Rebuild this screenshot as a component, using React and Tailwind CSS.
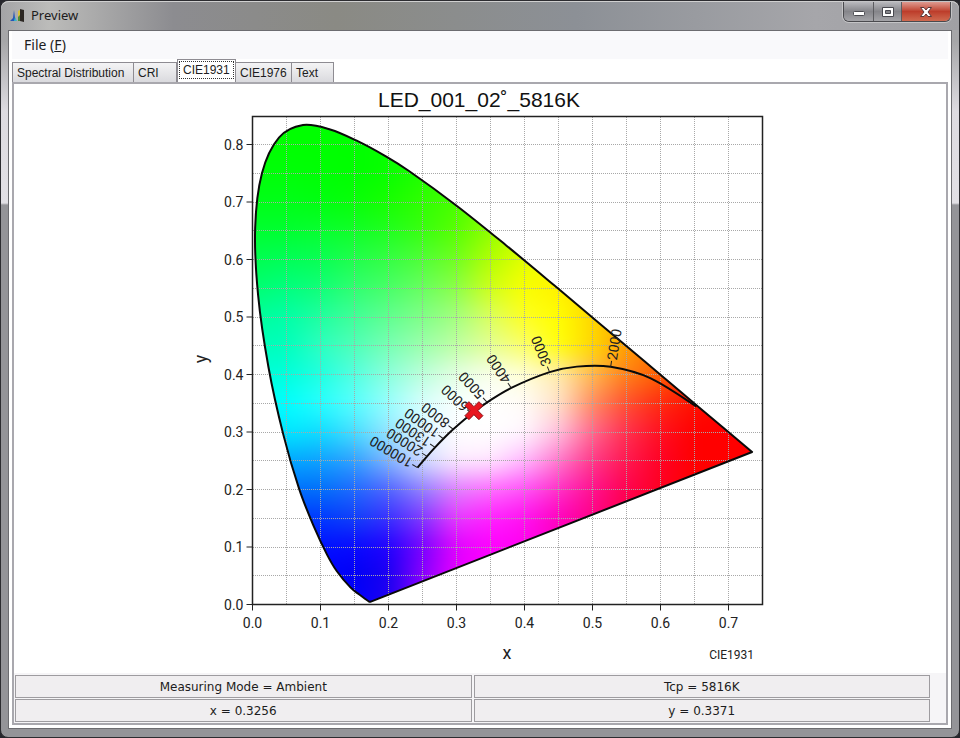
import React from 'react';

const TABS = [
  { label: 'Spectral Distribution', width: 'w-[122px]' },
  { label: 'CRI', width: 'w-[43px]' },
  { label: 'CIE1931', width: 'w-[59px]' },
  { label: 'CIE1976', width: 'w-[56px]' },
  { label: 'Text', width: 'w-[42px]' },
];

// Plot geometry, in svg units
const LEFT = 62.5;
const RIGHT = 572.5;
const TOP = 32.5;
const BOTTOM = 520.5;
const px = (x) => LEFT + x * 680;
const py = (y) => BOTTOM - y * 575;

// Spectral locus, 380nm to 700nm
const LOCUS = [
  [0.1741, 0.005], [0.1714, 0.0051], [0.1644, 0.0109], [0.1566, 0.0177],
  [0.144, 0.0297], [0.1241, 0.0578], [0.1096, 0.0868], [0.0913, 0.1327],
  [0.0687, 0.2007], [0.0454, 0.295], [0.0235, 0.4127], [0.0082, 0.5384],
  [0.0039, 0.6548], [0.0139, 0.7502], [0.0389, 0.812], [0.0743, 0.8338],
  [0.1142, 0.8262], [0.1547, 0.8059], [0.1929, 0.7816], [0.2296, 0.7543],
  [0.3016, 0.6923], [0.3731, 0.6245], [0.4441, 0.5547], [0.5125, 0.4866],
  [0.5752, 0.4242], [0.627, 0.3725], [0.6915, 0.3083], [0.7347, 0.2653],
];

const PLANCKIAN = [
  [0.2426, 0.2381], [0.2567, 0.2576], [0.2685, 0.2733], [0.2807, 0.2883],
  [0.2952, 0.3048], [0.3221, 0.3318], [0.3451, 0.3516], [0.3805, 0.3767],
  [0.4369, 0.4041], [0.477, 0.4137], [0.5267, 0.4133], [0.5857, 0.3932],
  [0.6528, 0.3445],
];

const TEMPERATURES = [
  { label: '2000', x: 0.5267, y: 0.4133, angle: -81 },
  { label: '3000', x: 0.4369, y: 0.4041, angle: -112 },
  { label: '4000', x: 0.3805, y: 0.3767, angle: -124 },
  { label: '5000', x: 0.3451, y: 0.3516, angle: -133 },
  { label: '6000', x: 0.3221, y: 0.3318, angle: -137 },
  { label: '8000', x: 0.2952, y: 0.3048, angle: -142 },
  { label: '10000', x: 0.2807, y: 0.2883, angle: -144 },
  { label: '13000', x: 0.2685, y: 0.2733, angle: -146 },
  { label: '20000', x: 0.2567, y: 0.2576, angle: -148 },
  { label: '100000', x: 0.2426, y: 0.2381, angle: -149 },
];

// Colours on a 0.05 grid: one row per y (0.85 down to 0), one entry per x from 0
const COLORS = [
  '00ff00 00ff00 00ff00 00ff00 08ff00 18ff00 30ff00 60ff00',
  '00ff00 00ff00 00ff00 00ff00 08ff00 18ff00 30ff00 60ff00',
  '00ff08 00ff08 00ff04 00ff00 08ff00 20ff00 38ff00 68ff00',
  '00ff18 00ff18 00ff10 08ff08 18ff00 30ff00 48ff00 78ff00 b0ff00',
  '00ff30 00ff30 08ff30 10ff28 20ff20 38ff10 58ff00 90ff00 c8ff00',
  '00ff50 00ff58 08ff54 20ff4c 34ff44 50ff38 70ff20 b4ff00 e4ff00 ffff00',
  '00ff70 00ff80 10ff78 30ff70 48ff68 68ff60 8cff48 d0ff18 faff00 fff000 ffd800',
  '00ff9c 00ffa8 20ffa0 40ff98 60ff90 80ff88 a4ff80 dcff60 ffff20 ffff00 ffd800 ffa000',
  '00ffb8 00ffbc 2dffc0 50ffb8 78ffb4 9cffac c0ffa4 e4ff94 fcff68 ffff08 ffd800 ffa000 ff7000',
  '00ffd8 00ffdc 20ffe0 54ffe0 8cffdc bcffdc e4ffe4 faffec ffffd8 ffecb0 ffb850 ff8018 ff6000 ff3000',
  '00ffff 00ffff 28ffff 58ffff 98ffff d8ffff faffff ffffff fffcf8 ffe2c8 ff8c60 ff5030 ff2a10 ff1000 ff0000',
  '00e0ff 00e8ff 10dcff 48deff 94e4ff dcf4ff ffffff ffffff fff8ff ffc0e0 ff6890 ff3050 ff1020 ff0000 ff0000',
  '00a0ff 00a8ff 10a0ff 30a0ff 80b4ff d0dcff fdecff ffe8ff ffb8ff ff78cc ff3888 ff1850 ff0025 ff0000 ff0000 ff0000',
  '0070ff 0070ff 0070f8 2068ff 5064ff 9080ff e080ff ff6cff ff50f8 ff30c8 ff1090 ff0050 ff0020 ff0000 ff0000 ff0000',
  '0030ff 0038ff 0038ff 1040f8 3830ff 8038ff e838ff ff20ff ff10f0 ff00c0 ff0088 ff0048 ff0020',
  '0010ff 0010ff 0010ff 0808ff 2000ff 7800ff e000ff ff00ff ff00f0 ff00c0 ff0088',
  '0000ff 0000ff 0000ff 0000f4 1800f0 8800ff e800ff ff00ff ff00f0',
  '0000ff 0000ff 0000ff 0000ff 2000f0 8800ff f000ff ff00ff',
].map((row) => {
  const cells = row.split(' ').map((hex) => [0, 2, 4].map((i) => parseInt(hex.slice(i, i + 2), 16)));
  while (cells.length < 16) cells.push(cells[cells.length - 1]);
  return cells;
});

const STRIP = 4;
const BLEED = 32;

// Cut the gamut into thin horizontal strips, each with its own gradient.
// They run past the plot so that the blur has colour to pick up at the edges.
const strips = [];
for (let top = TOP - BLEED; top < BOTTOM + BLEED; top += STRIP) {
  const value = (BOTTOM - top - STRIP / 2) / 575;
  const pos = Math.min(Math.max((0.85 - value) / 0.05, 0), COLORS.length - 1);
  const row = Math.min(Math.floor(pos), COLORS.length - 2);
  const t = pos - row;
  strips.push({
    top,
    stops: COLORS[row].map((c, i) =>
      `rgb(${c.map((v, k) => Math.round(v + (COLORS[row + 1][i][k] - v) * t)).join(',')})`
    ),
  });
}

// Catmull-Rom spline through the points
const smooth = (points) => {
  const p = points.map(([x, y]) => [px(x), py(y)]);
  let d = `M${p[0][0]} ${p[0][1]}`;
  for (let i = 0; i < p.length - 1; i++) {
    const a = p[i - 1] || p[i];
    const b = p[i];
    const c = p[i + 1];
    const e = p[i + 2] || c;
    d += `C${b[0] + (c[0] - a[0]) / 6} ${b[1] + (c[1] - a[1]) / 6} ${c[0] - (e[0] - b[0]) / 6} ${c[1] - (e[1] - b[1]) / 6} ${c[0]} ${c[1]}`;
  }
  return d;
};

const range = (n) => Array.from({ length: n }, (_, i) => i);

const ChromaticityChart = () => {
  const locus = smooth(LOCUS) + 'Z';

  return (
    <svg
      viewBox="0 0 580 588"
      className="mx-auto block w-[580px] max-w-full font-[Roboto,sans-serif]"
      role="img"
      aria-label="CIE1931 chromaticity diagram"
    >
      <defs>
        <clipPath id="gamut"><path d={locus} /></clipPath>
        {/* Hides the facets that the colour grid leaves */}
        <filter id="soften" x="0" y="0" width="1" height="1" colorInterpolationFilters="sRGB">
          <feGaussianBlur stdDeviation="8" />
        </filter>
        {strips.map((s, i) => (
          <linearGradient key={i} id={`strip${i}`} gradientUnits="userSpaceOnUse" x1={LEFT} x2={RIGHT} y1="0" y2="0">
            {s.stops.map((c, k) => <stop key={k} offset={k / 15} stopColor={c} />)}
          </linearGradient>
        ))}
      </defs>

      <text x="289" y="23" textAnchor="middle" fontSize="21" fill="#111" className="font-['Liberation_Sans',sans-serif]">
        LED_001_02˚_5816K
      </text>

      <g clipPath="url(#gamut)">
        <g filter="url(#soften)">
          {strips.map((s, i) => (
            <rect
              key={i}
              x={LEFT - BLEED}
              y={s.top}
              width={RIGHT - LEFT + BLEED * 2}
              height={STRIP + 1}
              fill={`url(#strip${i})`}
            />
          ))}
        </g>
      </g>

      {/* Grid */}
      <g stroke="#a8a8a8" strokeDasharray="1 1" shapeRendering="crispEdges">
        {range(14).map((i) => (
          <line key={i} x1={px((i + 1) * 0.05)} x2={px((i + 1) * 0.05)} y1={TOP} y2={BOTTOM} />
        ))}
        {range(16).map((i) => (
          <line key={i} x1={LEFT} x2={RIGHT} y1={py((i + 1) * 0.05)} y2={py((i + 1) * 0.05)} />
        ))}
      </g>

      <rect x={LEFT} y={TOP} width={RIGHT - LEFT} height={BOTTOM - TOP} fill="none" stroke="#222" strokeWidth="1.5" />
      <path d={locus} fill="none" stroke="#0a0a0a" strokeWidth="2" strokeLinejoin="round" />
      <path d={smooth(PLANCKIAN)} fill="none" stroke="#0a0a0a" strokeWidth="2" />

      {/* Axes */}
      <g fontSize="14" fill="#222" stroke="none">
        {range(8).map((i) => (
          <g key={i}>
            <line x1={px(i * 0.1)} x2={px(i * 0.1)} y1={BOTTOM} y2={BOTTOM + 6} stroke="#222" />
            <text x={px(i * 0.1)} y={BOTTOM + 23} textAnchor="middle">{(i * 0.1).toFixed(1)}</text>
          </g>
        ))}
        {range(9).map((i) => (
          <g key={i}>
            <line x1={LEFT - 6} x2={LEFT} y1={py(i * 0.1)} y2={py(i * 0.1)} stroke="#222" />
            <text x={LEFT - 9} y={py(i * 0.1) + 5} textAnchor="end">{(i * 0.1).toFixed(1)}</text>
          </g>
        ))}
      </g>
      <text x="317" y="575" textAnchor="middle" fontSize="18" fill="#222">x</text>
      <text transform="translate(17 275) rotate(-90)" textAnchor="middle" fontSize="18" fill="#222">y</text>
      <text x="564" y="575" textAnchor="end" fontSize="12" fill="#222">CIE1931</text>

      {/* Colour temperatures along the Planckian locus */}
      {TEMPERATURES.map((t) => (
        <g key={t.label} transform={`translate(${px(t.x)} ${py(t.y)}) rotate(${t.angle})`}>
          <line x1="0" x2="6" stroke="#222" />
          <text x="7" y="5" fontSize="14" fill="#222">{t.label}</text>
        </g>
      ))}

      {/* Measured point */}
      <path
        transform={`translate(${px(0.3256)} ${py(0.3371)})`}
        d="M-5-9 0-4 5-9 9-5 4 0 9 5 5 9 0 4-5 9-9 5-4 0-9-5Z"
        fill="#e8171f"
        stroke="#8c1014"
      />
    </svg>
  );
};

const AppIcon = () => (
  <svg viewBox="0 0 16 16" className="h-4 w-4" aria-hidden="true">
    <path d="M0 13 3 10 4 2 5 10 6 13Z" fill="#2456b8" />
    <path d="M4 13 5 9 7 13Z" fill="#35b8c8" />
    <path d="M8 3 10 2V13H8Z" fill="#d8c23a" />
    <path d="M8 9 10 7V13H8Z" fill="#4f8a3a" />
    <path d="M10 1 14 2V14L10 13Z" fill="#2b2622" />
  </svg>
);

const WindowButtons = () => (
  <div className="flex h-5 overflow-hidden rounded-b-md border border-t-0 border-[#4a4a4e] text-white shadow-[0_0_0_1px_#c4c4c6]">
    <button aria-label="Minimize" className="flex w-[30px] items-center justify-center border-r border-[#5c5c60] bg-linear-to-b from-[#b9b9bd] via-[#85858a] to-[#a4a4a8]">
      <svg viewBox="0 0 14 10" className="h-[10px] w-[14px]">
        <rect x="1.5" y="4.5" width="11" height="4" rx="1" fill="#fff" stroke="#4a4a50" />
      </svg>
    </button>
    <button aria-label="Maximize" className="flex w-[28px] items-center justify-center border-r border-[#5c5c60] bg-linear-to-b from-[#b9b9bd] via-[#85858a] to-[#a4a4a8]">
      <svg viewBox="0 0 14 12" className="h-3 w-[14px]">
        <path d="M1.5 1.5H12.5V10.5H1.5ZM4.5 4.5V7.5H9.5V4.5Z" fill="#fff" fillRule="evenodd" stroke="#4a4a50" />
      </svg>
    </button>
    <button aria-label="Close" className="flex w-[48px] items-center justify-center bg-linear-to-b from-[#dd9a90] via-[#bd3d2b] to-[#cf6a50]">
      <svg viewBox="0 0 14 12" className="h-3 w-[14px]">
        <path d="M1.5 1.5H5L7 4 9 1.5H12.5L9 6 12.5 10.5H9L7 8 5 10.5H1.5L5 6Z" fill="#fff" stroke="#5a3838" />
      </svg>
    </button>
  </div>
);

const Readout = ({ children }) => (
  <div className="flex h-[23px] items-center justify-center border border-[#9e9ca0] bg-[#f0eef0] font-['DejaVu_Sans',sans-serif] text-xs">
    {children}
  </div>
);

const App = () => {
  return (
    <div className="flex min-h-screen flex-col bg-[#26262c] font-['Noto_Sans',sans-serif] text-[#1c1c20]">
      <div className="flex flex-1 flex-col rounded-lg border border-[#2c2c30] bg-[linear-gradient(#a6a6a8_40px,#dddbe0_110px,#e2e0e5_202px,#949498_204px)] px-[7px] pb-2">
        <header className="-mx-[7px] flex h-[29px] items-start justify-between rounded-t-lg border-t border-[#d0d0d0] bg-[linear-gradient(90deg,#a4a4a6,#bcbcba_5%,#8c8c90_18%,#8a8a84_35%,#8c9096_60%,#a6a6aa_85%,#a0a0a4)] pr-2 pl-[9px]">
          <div className="flex h-[28px] items-center gap-[5px]">
            <AppIcon />
            <h1 className="text-[13px]">Preview</h1>
          </div>
          <WindowButtons />
        </header>

        <main className="flex flex-1 flex-col border border-[#6c6c70] bg-white px-[3px] pb-[3px]">
          <nav className="flex h-[28px] items-center bg-[#f9f9fb] pl-2">
            <button className="px-1 text-sm">File (<u>F</u>)</button>
          </nav>

          <div role="tablist" className="flex items-end font-['Liberation_Sans',sans-serif] text-xs">
            {TABS.map(({ label, width }) => (
              <button
                key={label}
                role="tab"
                aria-selected={label === 'CIE1931'}
                className={`${width} text-left ${
                  label === 'CIE1931'
                    ? 'h-[23px] border border-b-0 border-[#8e8c92] bg-white px-px pb-0.5'
                    : 'h-5 border border-b-0 border-l-0 border-[#8e8c92] bg-linear-to-b from-[#f4f4f5] to-[#dadade] px-1 first:border-l'
                }`}
              >
                {label === 'CIE1931' ? (
                  <span className="block border border-dotted border-[#333] px-[3px]">{label}</span>
                ) : (
                  label
                )}
              </button>
            ))}
          </div>

          <section role="tabpanel" className="flex flex-1 flex-col border-2 border-[#a9a8ae] bg-white">
            <ChromaticityChart />
            <div className="mt-auto grid grid-cols-2 gap-x-0.5 gap-y-px bg-[#f6f5f7] pt-0.5 pr-4 pb-px pl-px">
              <Readout>Measuring Mode = Ambient</Readout>
              <Readout>Tcp = 5816K</Readout>
              <Readout>x = 0.3256</Readout>
              <Readout>y = 0.3371</Readout>
            </div>
          </section>
        </main>
      </div>
    </div>
  );
};

export default App;
